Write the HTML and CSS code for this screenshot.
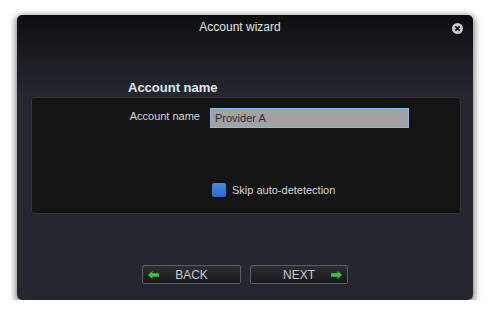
FILE: index.html
```html
<!DOCTYPE html>
<html>
<head>
<meta charset="UTF-8" />
<title>Account wizard</title>
    <link rel="stylesheet" href="styles.css">
</head>
    <body>
    <div class="window">
        <div class="titlebar">
            <span class="title">Account wizard</span>
            <span class="close">
                <svg width="11" height="11" viewBox="0 0 11 11">
                    <circle cx="5.5" cy="5.5" r="5.5" fill="#c9cbcf" />
                    <path d="M3.3 3.3 L7.7 7.7 M7.7 3.3 L3.3 7.7" stroke="#1a1c20" stroke-width="1.8" />
                </svg>
            </span>
        </div>

        <div class="heading">Account name</div>
        <div class="panel">
            <div class="field">
                <label for="accountName">Account name</label>
                <input id="accountName" type="text" value="Provider A" />
            </div>
            <div class="check">
                <span class="box"></span>
                <span>Skip auto-detetection</span>
            </div>
        </div>

        <div class="buttons">
            <button class="btn back">
                <svg class="arrow" width="11" height="8" viewBox="0 0 11 8">
                    <path d="M0 4 L4.5 0 L4.5 2.3 L11 2.3 L11 5.7 L4.5 5.7 L4.5 8 Z" fill="#3cc43c" />
                </svg>
                <span>BACK</span>
            </button>
            <button class="btn next">
                <span>NEXT</span>
                <svg class="arrow" width="11" height="8" viewBox="0 0 11 8">
                    <path d="M11 4 L6.5 0 L6.5 2.3 L0 2.3 L0 5.7 L6.5 5.7 L6.5 8 Z" fill="#3cc43c" />
                </svg>
            </button>
        </div>
    </div>
    </body>
</html>
```

FILE: styles.css
```css
body {
  margin: 0;
  background: #fff;
  font-family: "Liberation Sans", Arial, sans-serif;
}
.window {
  margin: 15px 0 0 17px;
  width: 456px;
  height: 285px;
  border-radius: 5px;
  background: linear-gradient(to bottom, #0d0e10 0px, #1c1e24 45px, #24272f 80px, #24272f 100%);
  box-shadow: 0 2px 6px 2px rgba(0, 0, 0, 0.45);
  display: flex;
  flex-direction: column;
}
.titlebar {
  height: 24px;
  display: flex;
  align-items: center;
  position: relative;
}
.title {
  flex: 1;
  text-align: center;
  padding-right: 10px;
  color: #e2e4e8;
  font-size: 12px;
}
.close {
  position: absolute;
  right: 10px;
  top: 8px;
  width: 11px;
  height: 11px;
}
.close svg {
  display: block;
}
.heading {
  margin: 41px 0 1px 111px;
  height: 16px;
  line-height: 16px;
  font-size: 13px;
  font-weight: bold;
  color: #e4e6ea;
}
.panel {
  margin: 0 12px 0 14px;
  height: 117px;
  box-sizing: border-box;
  background: #141414;
  border: 1px solid #30333a;
  border-radius: 3px;
  padding-top: 10px;
}
.field {
  display: grid;
  grid-template-columns: 168px 199px;
  column-gap: 10px;
  align-items: center;
}
.field label {
  text-align: right;
  color: #d4d6da;
  font-size: 11px;
  position: relative;
  top: -2px;
}
.field input {
  width: 199px;
  height: 20px;
  box-sizing: border-box;
  margin: 0;
  padding: 0 0 0 4px;
  border: 1px solid #8fb8e6;
  background: #a2a2a2;
  color: #2e2e2e;
  font-family: inherit;
  font-size: 11px;
  outline: none;
}
.check {
  display: flex;
  align-items: center;
  gap: 6px;
  margin: 55px 0 0 180px;
  color: #d4d6da;
  font-size: 11px;
}
.box {
  width: 14px;
  height: 14px;
  border-radius: 2px;
  background: linear-gradient(to bottom, #4a8ad8, #2f6cc0);
}
.buttons {
  display: flex;
  justify-content: center;
  gap: 9px;
  margin-top: 51px;
}
.btn {
  height: 19px;
  box-sizing: border-box;
  border: 1px solid #5a5d63;
  border-radius: 2px;
  background: linear-gradient(to bottom, #2e2f33, #17181a);
  color: #c6cad2;
  font-family: inherit;
  font-size: 12px;
  display: flex;
  align-items: center;
  padding: 0 5px;
}
.btn.back {
  width: 99px;
}
.btn.next {
  width: 98px;
}
.btn span {
  flex: 1;
  text-align: center;
}
.btn.back span {
  margin-right: 11px;
}
.btn.next span {
  margin-left: 11px;
}
.arrow {
  display: block;
}
```
